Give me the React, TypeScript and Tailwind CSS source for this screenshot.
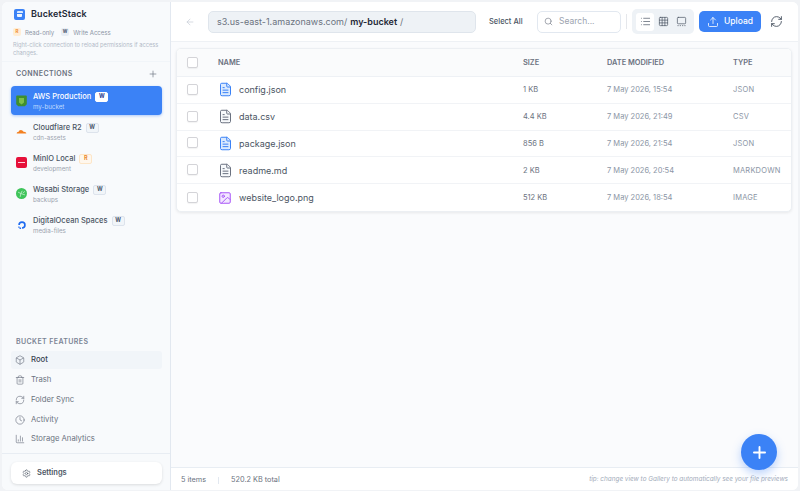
import { ArrowLeft, Box, ChartColumn, Clock, FileText, GalleryThumbnails, Grid3x3, Image, List, Plus, RefreshCw, Search, Settings, Trash2, Upload } from 'lucide-react'

const connections = [
  { name: 'AWS Production', sub: 'my-bucket', badge: 'W', active: true, logo: 'aws' },
  { name: 'Cloudflare R2', sub: 'cdn-assets', badge: 'W', logo: 'cf' },
  { name: 'MinIO Local', sub: 'development', badge: 'R', logo: 'minio' },
  { name: 'Wasabi Storage', sub: 'backups', badge: 'W', logo: 'wasabi' },
  { name: 'DigitalOcean Spaces', sub: 'media-files', badge: 'W', logo: 'do' },
]

const features = [
  { name: 'Root', icon: Box, active: true },
  { name: 'Trash', icon: Trash2 },
  { name: 'Folder Sync', icon: RefreshCw },
  { name: 'Activity', icon: Clock },
  { name: 'Storage Analytics', icon: ChartColumn },
]

const files = [
  { name: 'config.json', size: '1 KB', date: '7 May 2026, 15:54', type: 'JSON', kind: 'blue' },
  { name: 'data.csv', size: '4.4 KB', date: '7 May 2026, 21:49', type: 'CSV', kind: 'gray' },
  { name: 'package.json', size: '856 B', date: '7 May 2026, 21:54', type: 'JSON', kind: 'blue' },
  { name: 'readme.md', size: '2 KB', date: '7 May 2026, 20:54', type: 'MARKDOWN', kind: 'gray' },
  { name: 'website_logo.png', size: '512 KB', date: '7 May 2026, 18:54', type: 'IMAGE', kind: 'image' },
]

function Logo({ kind }: { kind: string }) {
  if (kind === 'aws')
    return (
      <svg viewBox="0 0 11 12" className="w-[11px] h-[12px] shrink-0">
        <path d="M1 .5h9a.8.8 0 0 1 .8.8v8l-2 2H2.200l-2-2v-8A.8.8 0 0 1 1 .5z" fill="#3f8f2f" />
        <path d="M3 3h5v4.500L5.500 9.500 3 7.500z" fill="#7cc04b" />
      </svg>
    )
  if (kind === 'cf')
    return (
      <svg viewBox="0 0 16 16" className="w-[11px] h-[11px] shrink-0">
        <path d="M1 11c0-1.500 1.200-2.200 2.500-2.200C4.200 6.800 6 5.500 8 6c1.400.3 2.400 1.200 2.800 2.500 1.800-.5 4.200.6 4.200 2.500z" fill="#f38020" />
      </svg>
    )
  if (kind === 'minio')
    return (
      <div className="w-[11px] h-[11px] rounded-[2px] bg-[#e6103a] flex items-center justify-center shrink-0">
        <div className="w-[7px] h-px bg-[#ffd0da]" />
      </div>
    )
  if (kind === 'wasabi')
    return (
      <svg viewBox="0 0 16 16" className="w-[11px] h-[11px] shrink-0">
        <circle cx="8" cy="8" r="8" fill="#3fc45a" />
        <path d="M3 6l4 2 2-4M7 8l-1 5M7 8l6 2M10 7l3-2" stroke="#d8f5de" strokeWidth="1" fill="none" />
      </svg>
    )
  return (
    <svg viewBox="0 0 16 16" className="w-[10px] h-[10px] shrink-0">
      <path d="M8 14a6 6 0 1 0-6-6h2.600A3.400 3.400 0 1 1 8 11.400z" fill="#1f6bf0" />
      <path d="M4 12h2.500v2.200H4zM2 10.500h2v1.700H2z" fill="#1f6bf0" />
    </svg>
  )
}

function Badge({ value, active }: { value: string; active?: boolean }) {
  const look = active
    ? 'bg-white border-white text-[#1e3a8a]'
    : value === 'R'
      ? 'bg-[#fff7ed] border-[#fde6c8] text-[#ea8a2e]'
      : 'bg-[#f1f5f9] border-[#dde3ec] text-[#475569]'
  return (
    <span className={`w-[13px] h-[10px] rounded-[2px] border text-[5.500px] font-bold flex items-center justify-center ${look}`}>
      {value}
    </span>
  )
}

function FileIcon({ kind }: { kind: string }) {
  if (kind === 'image') return <Image className="w-[14px] h-[14px] mr-px text-[#a855f7] fill-[#f3e8ff]" strokeWidth={1.7} />
  return (
    <FileText
      className={`w-[15px] h-[15px] ${kind === 'blue' ? 'text-[#3b82f6] fill-[#dbeafe]' : 'text-[#6b7280] fill-[#f8fafc]'}`}
      strokeWidth={1.6}
    />
  )
}

function Checkbox() {
  return <div className="w-[11px] h-[11px] -mt-px rounded-[2px] border border-[#d4d4d8] bg-white shadow-[0_1px_1px_rgba(0,0,0,0.05)]" />
}

export default function App() {
  return (
    <div className="w-[800px] h-[491px] overflow-hidden bg-[#f1f3f6] pt-[2px] pl-[2px] pr-[2px] pb-px font-['Inter',sans-serif]">
      <div className="h-full flex rounded-[6px] overflow-hidden bg-white">
        {/* Sidebar */}
        <aside className="w-[169px] shrink-0 flex flex-col bg-[#f8fafc] border-r border-[#e2e8f0]">
          <div className="pl-[12px] pr-[4px] pt-[4px] pb-[5px] border-b border-[#f1f5f9]">
            <div className="flex items-center gap-[6px] h-[14px] mt-[1px]">
              <div className="w-[11px] h-[11px] rounded-[2px] bg-[#3b82f6] flex flex-col items-center justify-center">
                <div className="w-[6px] h-[2px] rounded-t-[1px] bg-[#dbeafe]" />
                <div className="w-[5px] h-[3px] mt-[0.5px] rounded-b-[1px] bg-[#eff6ff]" />
              </div>
              <span className="text-[9px] font-semibold text-[#1f2937] tracking-[0.1px]">BucketStack</span>
            </div>
            <div className="flex items-center -ml-px mt-[7px] text-[6px] text-[#8b95a5] h-[8px]">
              <span className="w-[8px] h-[8px] rounded-[2px] bg-[#ffedd5] text-[#f08c2e] text-[4.500px] font-bold flex items-center justify-center">R</span>
              <span className="ml-[4px]">Read-only</span>
              <span className="ml-[7px] w-[8px] h-[8px] rounded-[2px] bg-[#e8edf4] text-[#475569] text-[4.500px] font-bold flex items-center justify-center">W</span>
              <span className="ml-[4px]">Write Access</span>
            </div>
            <p className="-ml-px mt-[5px] w-[150px] text-[5.700px] leading-[7.500px] text-[#b3bbc8]">Right-click connection to reload permissions if access changes.</p>
          </div>

          <div className="pl-[9px] pr-[8px]">
            <div className="flex items-center justify-between pl-[5px] pr-[4px] mt-[7px] mb-[7px] h-[10px]">
              <span className="text-[7px] font-semibold tracking-[0.4px] text-[#6b7280]">CONNECTIONS</span>
              <Plus className="w-[10px] h-[10px] text-[#6b7280]" strokeWidth={1.6} />
            </div>
            <div className="flex flex-col gap-[2px]">
              {connections.map((c) => (
                <div
                  key={c.name}
                  className={`h-[29px] rounded-[4px] pl-[5px] flex items-center gap-[6px] ${c.active ? 'bg-[#3b82f6] shadow-[0_1px_3px_rgba(59,130,246,0.4)]' : ''}`}
                >
                  <div className="w-[11px] flex items-center justify-center">
                    <Logo kind={c.logo} />
                  </div>
                  <div className="flex flex-col">
                    <div className="flex items-center gap-[4px] h-[12px]">
                      <span className={`text-[7.500px] font-medium ${c.active ? 'text-white' : 'text-[#4b5563]'}`}>{c.name}</span>
                      <Badge value={c.badge} active={c.active} />
                    </div>
                    <span className={`text-[6.200px] leading-[8px] ${c.active ? 'text-[#bfdbfe]' : 'text-[#9ca3af]'}`}>{c.sub}</span>
                  </div>
                </div>
              ))}
            </div>
          </div>

          <div className="flex-1" />

          <div className="pl-[9px] pr-[8px] pb-[3px]">
            <div className="pl-[5px] text-[7px] font-semibold tracking-[0.4px] text-[#7b8494] mb-[5px] h-[8px] leading-[8px]">BUCKET FEATURES</div>
            <div className="flex flex-col">
              {features.map((f) => (
                <div key={f.name} className={`h-[18px] mb-[1.750px] rounded-[3px] pl-[4px] flex items-center gap-[6px] ${f.active ? 'bg-[#f1f5f9]' : ''}`}>
                  <f.icon className="w-[10px] h-[10px] text-[#6b7280]" strokeWidth={1.5} />
                  <span className={`text-[7.700px] ${f.active ? 'text-[#374151] font-medium' : 'text-[#6b7280]'}`}>{f.name}</span>
                </div>
              ))}
            </div>
          </div>
          <div className="border-t border-[#e8edf3] pl-[9px] pr-[8px] pt-[8px] pb-[6px]">
            <div className="h-[22px] rounded-[6px] bg-white shadow-[0_1px_3px_rgba(0,0,0,0.12)] pl-[11px] flex items-center gap-[6px]">
              <Settings className="w-[9px] h-[9px] text-[#4b5563]" strokeWidth={1.6} />
              <span className="text-[7.500px] font-semibold text-[#4b5563]">Settings</span>
            </div>
          </div>
        </aside>

        {/* Main */}
        <main className="flex-1 min-w-0 flex flex-col relative bg-[#fafbfd]">
          <header className="h-[40px] shrink-0 flex items-center bg-white border-b border-[#eef1f5] pl-[14px]">
            <ArrowLeft className="w-[10px] h-[10px] text-[#c3c9d3]" strokeWidth={1.6} />
            <div className="ml-[13px] w-[268px] h-[22px] rounded-[5px] bg-[#eef2f6] border border-[#dfe5ec] pl-[8px] flex items-center text-[9px] text-[#6b7280]">
              <span>s3.us-east-1.amazonaws.com/</span>
              <span className="ml-[3px] font-semibold text-[#1f2937]">my-bucket</span>
              <span className="ml-[3px]">/</span>
            </div>
            <span className="ml-[13px] w-[35px] whitespace-nowrap text-[7.500px] font-medium text-[#4b5563]">Select All</span>
            <div className="ml-[13px] w-[84px] h-[22px] rounded-[5px] bg-white border border-[#e2e8f0] pl-[6px] flex items-center gap-[6px]">
              <Search className="w-[9px] h-[9px] text-[#6b7280]" strokeWidth={1.6} />
              <span className="text-[8.500px] text-[#9ca3af]">Search...</span>
            </div>
            <div className="ml-[5px] w-px h-[15px] bg-[#e5e7eb]" />
            <div className="ml-[5px] w-[62px] h-[25px] rounded-[5px] bg-[#eef2f6] flex items-center pl-[4px]">
              <div className="w-[18px] h-[18px] rounded-[3px] bg-white flex items-center justify-center">
                <List className="w-[11px] h-[11px] text-[#4b5563]" strokeWidth={1.5} />
              </div>
              <div className="w-[18px] h-[18px] flex items-center justify-center">
                <Grid3x3 className="w-[11px] h-[11px] text-[#4b5563]" strokeWidth={1.5} />
              </div>
              <div className="w-[18px] h-[18px] flex items-center justify-center">
                <GalleryThumbnails className="w-[11px] h-[11px] text-[#4b5563]" strokeWidth={1.5} />
              </div>
            </div>
            <div className="ml-[5px] w-[62px] h-[21px] rounded-[5px] bg-[#3b82f6] flex items-center justify-center gap-[5px] text-white">
              <Upload className="w-[12px] h-[12px]" strokeWidth={1.6} />
              <span className="text-[8.500px] font-medium">Upload</span>
            </div>
            <RefreshCw className="ml-[9px] w-[13px] h-[13px] text-[#4b5563]" strokeWidth={1.7} />
          </header>

          <div className="flex-1 min-h-0 pl-[5px] pr-[6px] pt-[6px]">
            <div className="rounded-[5px] bg-white border border-[#eceff3] shadow-[0_1px_3px_rgba(0,0,0,0.08)] overflow-hidden">
              <div className="h-[28px] flex items-center bg-[#fafbfc] border-b border-[#eef1f5] text-[7.400px] font-semibold text-[#6b7280]">
                <div className="w-[41px] pl-[10px]"><Checkbox /></div>
                <div className="w-[305px]">NAME</div>
                <div className="w-[84px]">SIZE</div>
                <div className="w-[126px]">DATE MODIFIED</div>
                <div>TYPE</div>
              </div>
              {files.map((f, i) => (
                <div key={f.name} className={`h-[26.800px] flex items-center ${i < files.length - 1 ? 'border-b border-[#f1f3f6]' : ''}`}>
                  <div className="w-[41px] pl-[10px]"><Checkbox /></div>
                  <div className="w-[305px] flex items-center gap-[6px]">
                    <FileIcon kind={f.kind} />
                    <span className="text-[9px] text-[#4b5563]">{f.name}</span>
                  </div>
                  <div className="w-[84px] text-[7.500px] text-[#6b7280]">{f.size}</div>
                  <div className="w-[126px] text-[7.500px] text-[#8b95a5]">{f.date}</div>
                  <div className="text-[7.500px] tracking-[0.2px] text-[#8b95a5]">{f.type}</div>
                </div>
              ))}
            </div>
          </div>

          <footer className="h-[23px] shrink-0 flex items-center bg-white border-t border-[#e8edf3] pl-[10px] pr-[10px] pt-[2px] text-[7.300px] text-[#6b7280]">
            <span>5 items</span>
            <div className="ml-[12px] mr-[12px] w-px h-[7px] bg-[#e2e8f0]" />
            <span>520.2 KB total</span>
            <span className="ml-auto text-[6.400px] italic text-[#a3acba]">tip: change view to Gallery to automatically see your file previews</span>
          </footer>

          <div className="absolute right-[21px] bottom-[20px] w-[36px] h-[36px] rounded-full bg-[#3b82f6] flex items-center justify-center shadow-[0_4px_10px_rgba(59,130,246,0.35)]">
            <Plus className="w-[19px] h-[19px] text-white" strokeWidth={2.4} />
          </div>
        </main>
      </div>
    </div>
  )
}
